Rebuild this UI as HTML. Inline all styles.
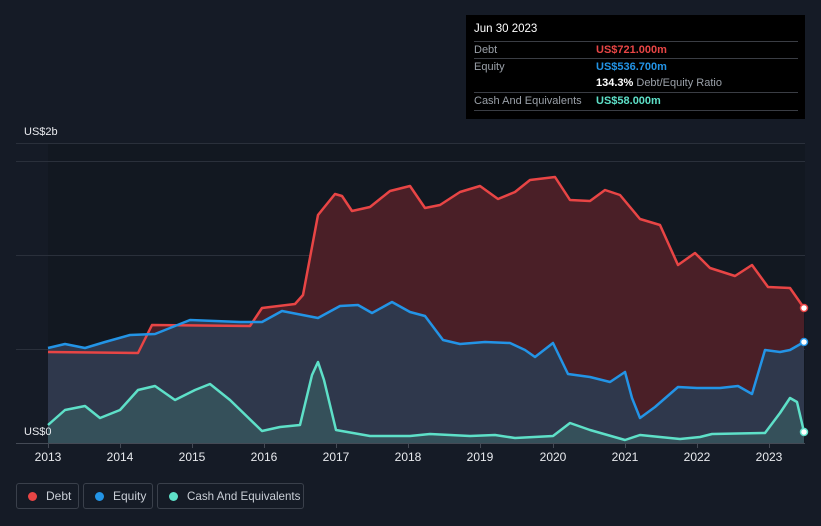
<!DOCTYPE html>
<html><head><meta charset="utf-8"><style>
body{margin:0;background:#151b26;width:821px;height:526px;overflow:hidden;font-family:"Liberation Sans",sans-serif;position:relative}
.tt{position:absolute;left:466px;top:15px;width:339px;height:104px;background:#000;color:#fff;font-size:11px}
.row{position:absolute;left:8px;width:324px;height:17px;border-top:1px solid #3a3d44;line-height:17px}
.l{color:#9aa0a8;position:absolute;left:0}
.v{position:absolute;left:122px}
.leg{position:absolute;top:483px;height:26px;border:1px solid #3a404b;border-radius:3px;color:#c9ced6;font-size:12px;line-height:25px;box-sizing:border-box;white-space:nowrap;overflow:hidden}
.dot{display:inline-block;width:9px;height:9px;border-radius:50%;margin:0 9px 0 11px;vertical-align:-1px}
.ax{position:absolute;top:450px;color:#e8eaee;font-size:12px;width:40px;text-align:center}
</style></head><body>
<svg width="821" height="526" style="position:absolute;left:0;top:0">
<rect x="48" y="143" width="757" height="300" fill="#121821"/>
<g stroke="#2a303b" stroke-width="1">
<line x1="16" y1="143.5" x2="805" y2="143.5"/><line x1="16" y1="161.5" x2="805" y2="161.5"/>
<line x1="16" y1="255.5" x2="805" y2="255.5"/><line x1="16" y1="349.5" x2="805" y2="349.5"/>
</g>
<path d="M48,352 L138,353 152,325 250,326 262,308 295,304 303,295 318,215 335,194 342,196 352,211 370,207 390,191 410,186 425,208 440,205 460,192 480,186 498,199 515,192 530,180 555,177 570,200 590,201 605,190 620,195 640,219 660,225 678,265 695,253 710,268 735,276 752,265 768,287 790,288 804,308 L804,443 48,443Z" fill="#4a1f27"/>
<path d="M48,348 L65,344 85,348 105,342 130,335 155,334 190,320 240,322 262,322 282,311 318,318 340,306 358,305 372,313 392,302 410,312 425,316 443,340 460,344 485,342 510,343 525,350 535,357 553,343 568,374 590,377 610,382 625,372 632,398 640,418 655,407 678,387 697,388 720,388 738,386 752,394 765,350 780,352 790,350 804,342 L804,443 48,443Z" fill="#2f384c"/>
<path d="M48,425 L65,410 85,406 100,418 120,410 138,390 155,386 175,400 195,390 210,384 230,400 262,431 280,427 300,425 312,375 318,362 324,380 336,430 370,436 410,436 430,434 470,436 495,435 515,438 553,436 570,423 590,430 625,440 640,435 680,439 700,437 712,434 765,433 780,413 790,398 797,402 804,432 L804,443 48,443Z" fill="#35505a"/>
<g fill="none" stroke-width="2.5" stroke-linejoin="round">
<polyline stroke="#e84545" points="48,352 138,353 152,325 250,326 262,308 295,304 303,295 318,215 335,194 342,196 352,211 370,207 390,191 410,186 425,208 440,205 460,192 480,186 498,199 515,192 530,180 555,177 570,200 590,201 605,190 620,195 640,219 660,225 678,265 695,253 710,268 735,276 752,265 768,287 790,288 804,308"/>
<polyline stroke="#2394e6" points="48,348 65,344 85,348 105,342 130,335 155,334 190,320 240,322 262,322 282,311 318,318 340,306 358,305 372,313 392,302 410,312 425,316 443,340 460,344 485,342 510,343 525,350 535,357 553,343 568,374 590,377 610,382 625,372 632,398 640,418 655,407 678,387 697,388 720,388 738,386 752,394 765,350 780,352 790,350 804,342"/>
<polyline stroke="#5ee0c8" points="48,425 65,410 85,406 100,418 120,410 138,390 155,386 175,400 195,390 210,384 230,400 262,431 280,427 300,425 312,375 318,362 324,380 336,430 370,436 410,436 430,434 470,436 495,435 515,438 553,436 570,423 590,430 625,440 640,435 680,439 700,437 712,434 765,433 780,413 790,398 797,402 804,432"/>
</g>
<circle cx="804" cy="308" r="3.5" fill="#fff" stroke="#e84545" stroke-width="1.5"/>
<circle cx="804" cy="342" r="3.5" fill="#fff" stroke="#2394e6" stroke-width="1.5"/>
<circle cx="804" cy="432" r="3.5" fill="#fff" stroke="#5ee0c8" stroke-width="1.5"/>
<line x1="16" y1="443.5" x2="805" y2="443.5" stroke="#444a55"/>
<g stroke="#444a55"><line x1="48.5" y1="443" x2="48.5" y2="448"/><line x1="120.5" y1="443" x2="120.5" y2="448"/><line x1="192.5" y1="443" x2="192.5" y2="448"/><line x1="264.5" y1="443" x2="264.5" y2="448"/><line x1="336.5" y1="443" x2="336.5" y2="448"/><line x1="408.5" y1="443" x2="408.5" y2="448"/><line x1="480.5" y1="443" x2="480.5" y2="448"/><line x1="553.5" y1="443" x2="553.5" y2="448"/><line x1="625.5" y1="443" x2="625.5" y2="448"/><line x1="697.5" y1="443" x2="697.5" y2="448"/><line x1="769.5" y1="443" x2="769.5" y2="448"/></g>
<text x="24" y="135" fill="#e8eaee" font-size="11" font-family="Liberation Sans">US$2b</text>
<text x="24" y="435" fill="#e8eaee" font-size="11" font-family="Liberation Sans">US$0</text>
</svg>
<div class="ax" style="left:28px">2013</div><div class="ax" style="left:100px">2014</div><div class="ax" style="left:172px">2015</div><div class="ax" style="left:244px">2016</div><div class="ax" style="left:316px">2017</div><div class="ax" style="left:388px">2018</div><div class="ax" style="left:460px">2019</div><div class="ax" style="left:533px">2020</div><div class="ax" style="left:605px">2021</div><div class="ax" style="left:677px">2022</div><div class="ax" style="left:749px">2023</div>
<div class="tt">
<div style="position:absolute;left:8px;top:8px;font-size:11.5px">Jun 30 2023</div>
<div class="row" style="top:26px"><span class="l">Debt</span><span class="v" style="color:#e84545;font-weight:bold">US$721.000m</span></div>
<div class="row" style="top:43px"><span class="l">Equity</span><span class="v" style="color:#2394e6;font-weight:bold">US$536.700m</span></div>
<div class="row" style="top:60px;border-top:none"><span class="v"><b>134.3%</b> <span style="color:#9aa0a8">Debt/Equity Ratio</span></span></div>
<div class="row" style="top:77px"><span class="l">Cash And Equivalents</span><span class="v" style="color:#5ee0c8;font-weight:bold">US$58.000m</span></div>
<div class="row" style="top:95px;height:0"></div>
</div>
<div class="leg" style="left:16px;width:63px"><span class="dot" style="background:#e84545"></span>Debt</div>
<div class="leg" style="left:83px;width:70px"><span class="dot" style="background:#2394e6"></span>Equity</div>
<div class="leg" style="left:157px;width:147px;font-size:11.6px"><span class="dot" style="background:#5ee0c8"></span>Cash And Equivalents</div>
</body></html>
